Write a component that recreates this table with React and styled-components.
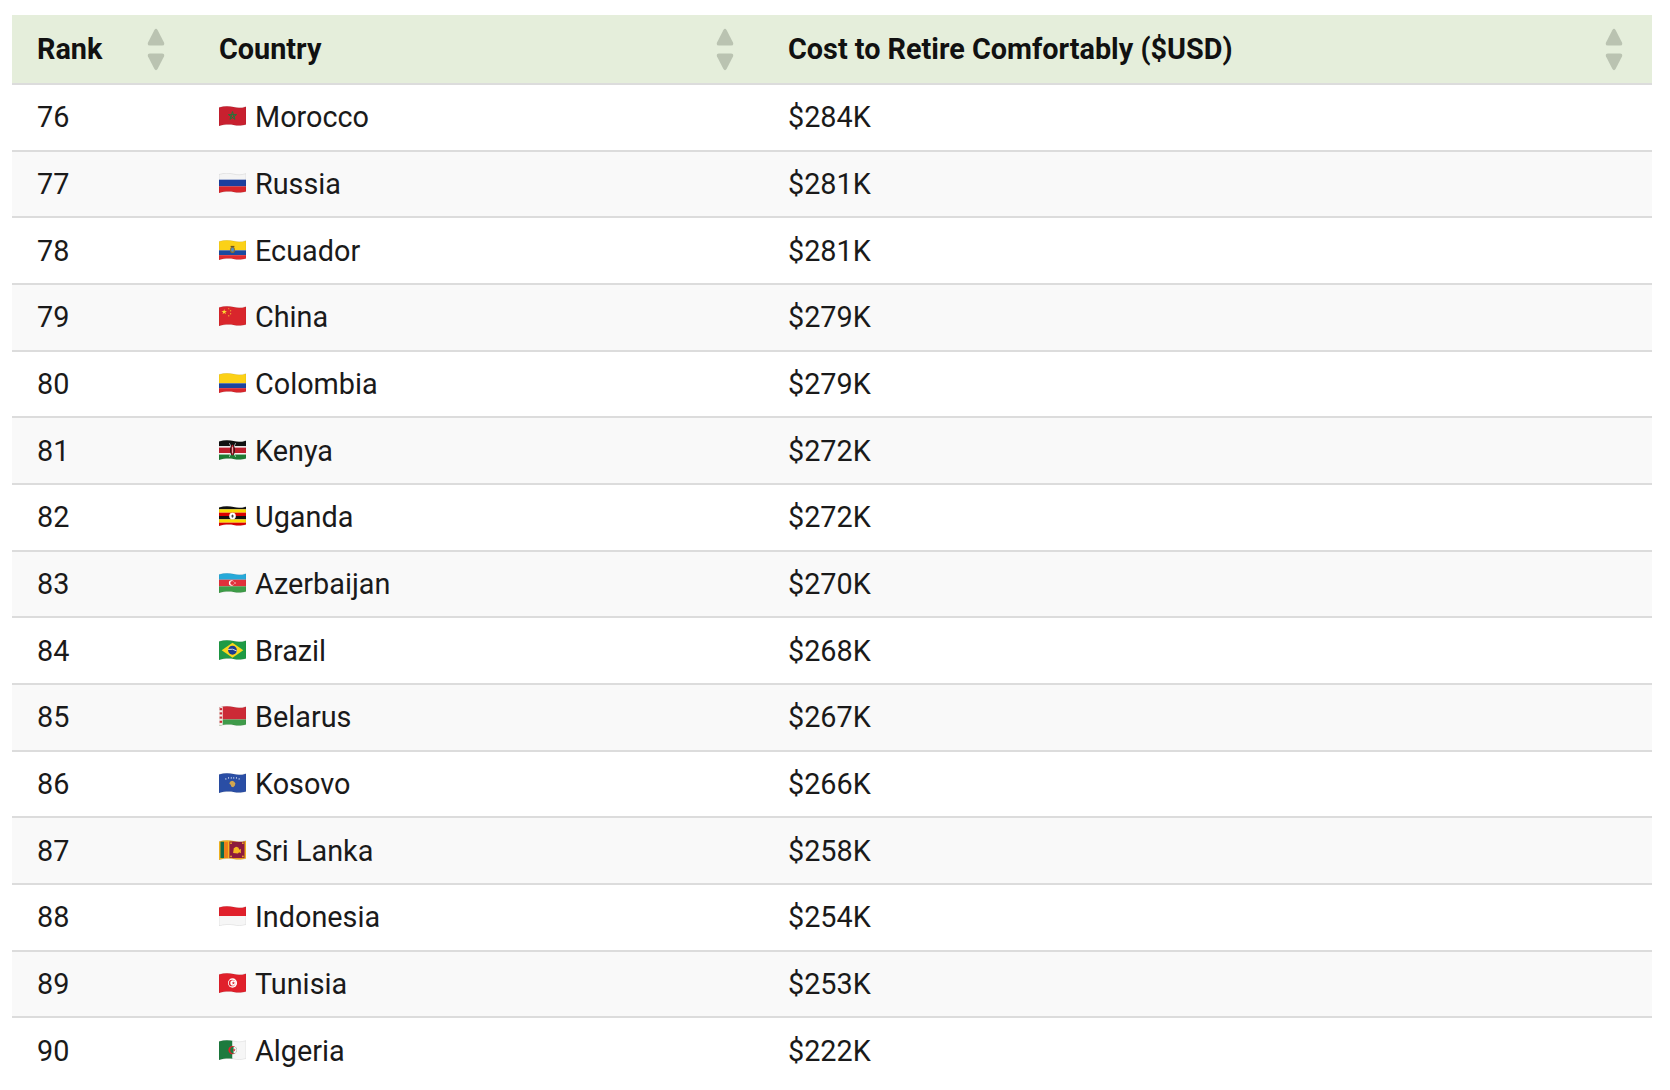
import React, { useId } from 'react';
import styled, { createGlobalStyle } from 'styled-components';

const GlobalStyle = createGlobalStyle`
  html, body {
    margin: 0;
    padding: 0;
    background: #ffffff;
  }
  body {
    font-family: Roboto, "Noto Sans", "Liberation Sans", sans-serif;
    color: #1a1a1a;
  }
`;

const Page = styled.div`
  padding: 15px 18px 0 12px;
`;

const Table = styled.div`
  width: 1640px;
  display: grid;
  grid-template-columns: 182px 569px 889px;
`;

const HeadCell = styled.div`
  height: 68px;
  box-sizing: border-box;
  background: #e5eedb;
  display: flex;
  align-items: center;
  justify-content: space-between;
  padding: 0 29px 0 25px;
  font-size: 28.8px;
  font-weight: 700;
  color: #111111;
`;

const Cell = styled.div`
  height: 66.67px;
  box-sizing: border-box;
  border-top: 2px solid #dcdcdc;
  background: ${props => (props.$striped ? '#f9f9f9' : '#ffffff')};
  display: flex;
  align-items: center;
  gap: 9px;
  padding: 0 25px;
  font-size: 28.8px;
  font-weight: 400;
  color: #1a1a1a;
`;

const FlagSvg = styled.svg`
  width: 27px;
  height: 20px;
  flex: none;
  margin-top: -2px;
`;

function SortIcon() {
  return (
    <svg width="18" height="43" viewBox="0 0 18 43" aria-hidden="true">
      <path
        d="M7.3 2.2 Q9 -0.6 10.7 2.2 L17 14.6 Q18 17.4 15.2 17.4 L2.8 17.4 Q0 17.4 1 14.6 Z"
        fill="#bac3b1"
      />
      <path
        d="M7.3 40.8 Q9 43.6 10.7 40.8 L17 28.4 Q18 25.6 15.2 25.6 L2.8 25.6 Q0 25.6 1 28.4 Z"
        fill="#bac3b1"
      />
    </svg>
  );
}

const WAVE = 'M0 1.4 C5 -0.2 10 0 14 1 S21 2 26 0.6 V17.6 C21 19 18 18.8 14 18 S5 17.4 0 19 Z';

function starPoints(cx, cy, r, rot = -90) {
  const pts = [];
  for (let i = 0; i < 10; i++) {
    const rr = i % 2 === 0 ? r : r * 0.382;
    const a = ((rot + i * 36) * Math.PI) / 180;
    pts.push(`${(cx + rr * Math.cos(a)).toFixed(2)},${(cy + rr * Math.sin(a)).toFixed(2)}`);
  }
  return pts.join(' ');
}

function Flag({ children }) {
  const id = useId().replace(/:/g, '');
  return (
    <FlagSvg viewBox="0 0 26 19" preserveAspectRatio="none" aria-hidden="true">
      <defs>
        <clipPath id={`w${id}`}>
          <path d={WAVE} />
        </clipPath>
      </defs>
      <g clipPath={`url(#w${id})`}>{children}</g>
      <path d={WAVE} fill="none" stroke="rgba(0,0,0,0.12)" strokeWidth="0.6" />
    </FlagSvg>
  );
}

const Stripes = ({ colors }) => {
  const h = 19 / colors.length;
  return colors.map((c, i) => (
    <rect key={i} x="0" y={i * h} width="26" height={h + 0.05} fill={c} />
  ));
};

const flags = {
  Morocco: (
    <Flag>
      <rect width="26" height="19" fill="#c8202f" />
      <polygon
        points="13,5.3 15.4,12.7 9.1,8.2 16.9,8.2 10.6,12.7"
        fill="none"
        stroke="#1b7a3a"
        strokeWidth="0.9"
        strokeLinejoin="round"
      />
    </Flag>
  ),
  Russia: (
    <Flag>
      <Stripes colors={['#f4f4f4', '#1c3f9e', '#d8262b']} />
    </Flag>
  ),
  Ecuador: (
    <Flag>
      <rect width="26" height="9.8" fill="#fbd118" />
      <rect y="9.8" width="26" height="4.6" fill="#1c4aa0" />
      <rect y="14.4" width="26" height="5" fill="#e12b2e" />
      <ellipse cx="13" cy="9.4" rx="2.3" ry="3" fill="#8a6d2f" />
      <ellipse cx="13" cy="9.2" rx="1.4" ry="1.9" fill="#4f8fc6" />
      <rect x="11.2" y="5.6" width="3.6" height="1" fill="#6b5020" />
    </Flag>
  ),
  China: (
    <Flag>
      <rect width="26" height="19" fill="#d9262c" />
      <polygon points={starPoints(5, 5.6, 2.8)} fill="#fcd531" />
      <polygon points={starPoints(9.4, 2.6, 0.9)} fill="#fcd531" />
      <polygon points={starPoints(11.2, 4.6, 0.9)} fill="#fcd531" />
      <polygon points={starPoints(11.2, 7.4, 0.9)} fill="#fcd531" />
      <polygon points={starPoints(9.4, 9.4, 0.9)} fill="#fcd531" />
    </Flag>
  ),
  Colombia: (
    <Flag>
      <rect width="26" height="9.8" fill="#fcd116" />
      <rect y="9.8" width="26" height="4.6" fill="#1a44a0" />
      <rect y="14.4" width="26" height="5" fill="#d9262c" />
    </Flag>
  ),
  Kenya: (
    <Flag>
      <rect width="26" height="6" fill="#111111" />
      <rect y="6" width="26" height="1.2" fill="#ffffff" />
      <rect y="7.2" width="26" height="5.4" fill="#be1e2d" />
      <rect y="12.6" width="26" height="1.2" fill="#ffffff" />
      <rect y="13.8" width="26" height="5.2" fill="#1e7b34" />
      <line x1="10" y1="3" x2="16" y2="16" stroke="#ffffff" strokeWidth="0.6" />
      <line x1="16" y1="3" x2="10" y2="16" stroke="#ffffff" strokeWidth="0.6" />
      <ellipse cx="13" cy="9.6" rx="2.2" ry="5" fill="#111111" />
      <ellipse cx="13" cy="9.6" rx="1.2" ry="5" fill="#be1e2d" />
      <rect x="12.7" y="6.5" width="0.6" height="6.2" fill="#ffffff" />
    </Flag>
  ),
  Uganda: (
    <Flag>
      <Stripes colors={['#111111', '#fcdc04', '#d90000', '#111111', '#fcdc04', '#d90000']} />
      <circle cx="13" cy="9.5" r="3.2" fill="#ffffff" />
      <ellipse cx="13" cy="9.6" rx="1" ry="1.6" fill="#444444" />
    </Flag>
  ),
  Azerbaijan: (
    <Flag>
      <Stripes colors={['#27a9d9', '#e1303b', '#3e9c48']} />
      <circle cx="12" cy="9.5" r="2.5" fill="#ffffff" />
      <circle cx="12.8" cy="9.5" r="2" fill="#e1303b" />
      <polygon points={starPoints(15.4, 9.5, 1.1)} fill="#ffffff" />
    </Flag>
  ),
  Brazil: (
    <Flag>
      <rect width="26" height="19" fill="#1f9a45" />
      <polygon points="2.6,9.7 13,2.6 23.4,9.7 13,16.8" fill="#f9d71c" />
      <circle cx="13" cy="9.7" r="4.2" fill="#1d3b8f" />
      <path d="M8.9 9 Q13 7.8 17.1 10.4" stroke="#ffffff" strokeWidth="0.8" fill="none" />
    </Flag>
  ),
  Belarus: (
    <Flag>
      <rect width="26" height="12.8" fill="#cc2a36" />
      <rect y="12.8" width="26" height="6.2" fill="#3f9b4a" />
      <rect width="3.6" height="19" fill="#f5f0ea" />
      <rect x="0.6" y="2" width="2.4" height="2" fill="#cc2a36" />
      <rect x="0.6" y="6" width="2.4" height="2" fill="#cc2a36" />
      <rect x="0.6" y="10" width="2.4" height="2" fill="#cc2a36" />
      <rect x="0.6" y="14" width="2.4" height="2" fill="#cc2a36" />
    </Flag>
  ),
  Kosovo: (
    <Flag>
      <rect width="26" height="19" fill="#2a4ea5" />
      <path
        d="M10.6 8.4 L12.6 7.4 L14.4 8 L15.8 9.8 L15.2 12 L13.6 13.6 L12 13 L11.2 11.2 L10 10.2 Z"
        fill="#d0a650"
      />
      {[6.6, 9.2, 11.8, 14.2, 16.8, 19.4].map((x, i) => (
        <circle key={i} cx={x} cy={i === 0 || i === 5 ? 5.6 : 4.7} r="0.55" fill="#ffffff" />
      ))}
    </Flag>
  ),
  'Sri Lanka': (
    <Flag>
      <rect width="26" height="19" fill="#f6b722" />
      <rect x="1.4" y="1.6" width="3.6" height="15.6" fill="#0f6a4a" />
      <rect x="5" y="1.6" width="3.6" height="15.6" fill="#ef7d1a" />
      <rect x="10" y="1.4" width="14.6" height="15.8" fill="#8d1b3d" />
      <path
        d="M13.6 12.4 L14.2 7.8 L16.4 6.4 L18.6 7.2 L19.6 9.2 L21 8.4 L21 12.6 L19.4 11.6 L18.2 12.8 Z"
        fill="#f6b722"
      />
      <circle cx="11.6" cy="3" r="0.8" fill="#f6b722" />
      <circle cx="23" cy="3" r="0.8" fill="#f6b722" />
      <circle cx="11.6" cy="15.6" r="0.8" fill="#f6b722" />
      <circle cx="23" cy="15.6" r="0.8" fill="#f6b722" />
    </Flag>
  ),
  Indonesia: (
    <Flag>
      <rect width="26" height="9.6" fill="#e0202b" />
      <rect y="9.6" width="26" height="9.4" fill="#f6f6f6" />
    </Flag>
  ),
  Tunisia: (
    <Flag>
      <rect width="26" height="19" fill="#e0202b" />
      <circle cx="13" cy="9.5" r="4.4" fill="#ffffff" />
      <circle cx="12.6" cy="9.5" r="3.2" fill="#e0202b" />
      <circle cx="13.5" cy="9.5" r="2.6" fill="#ffffff" />
      <polygon points={starPoints(13.9, 9.5, 1.7)} fill="#e0202b" />
    </Flag>
  ),
  Algeria: (
    <Flag>
      <rect width="13" height="19" fill="#1d7a3e" />
      <rect x="13" width="13" height="19" fill="#f6f6f6" />
      <circle cx="13" cy="9.6" r="4" fill="#e0202b" />
      <circle cx="14" cy="9.6" r="3.2" fill="#1d7a3e" />
      <path d="M14 6.4 A3.2 3.2 0 0 1 14 12.8 Z" fill="#f6f6f6" />
      <polygon points={starPoints(14.6, 9.6, 1.6, -162)} fill="#e0202b" />
    </Flag>
  ),
};

const rows = [
  [76, 'Morocco', '$284K'],
  [77, 'Russia', '$281K'],
  [78, 'Ecuador', '$281K'],
  [79, 'China', '$279K'],
  [80, 'Colombia', '$279K'],
  [81, 'Kenya', '$272K'],
  [82, 'Uganda', '$272K'],
  [83, 'Azerbaijan', '$270K'],
  [84, 'Brazil', '$268K'],
  [85, 'Belarus', '$267K'],
  [86, 'Kosovo', '$266K'],
  [87, 'Sri Lanka', '$258K'],
  [88, 'Indonesia', '$254K'],
  [89, 'Tunisia', '$253K'],
  [90, 'Algeria', '$222K'],
];

const headers = ['Rank', 'Country', 'Cost to Retire Comfortably ($USD)'];

export default function App() {
  return (
    <>
      <GlobalStyle />
      <Page>
        <Table>
          {headers.map(h => (
            <HeadCell key={h}>
              <span>{h}</span>
              <SortIcon />
            </HeadCell>
          ))}
          {rows.map(([rank, country, cost], i) => (
            <React.Fragment key={rank}>
              <Cell $striped={i % 2 === 1}>{rank}</Cell>
              <Cell $striped={i % 2 === 1}>
                {flags[country]}
                <span>{country}</span>
              </Cell>
              <Cell $striped={i % 2 === 1}>{cost}</Cell>
            </React.Fragment>
          ))}
        </Table>
      </Page>
    </>
  );
}
